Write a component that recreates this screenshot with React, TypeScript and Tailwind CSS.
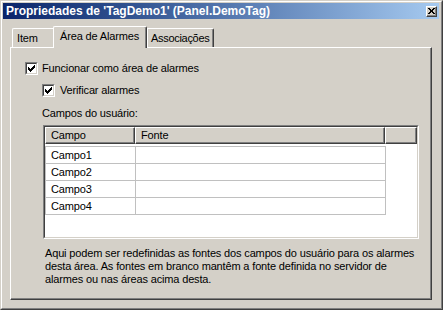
import React from "react";

function Check() {
  return (
    <svg width="7" height="7" viewBox="0 0 7 7" shapeRendering="crispEdges">
      <g fill="#000">
        <rect x="6" y="0" width="1" height="1" />
        <rect x="5" y="1" width="2" height="1" />
        <rect x="0" y="2" width="1" height="1" />
        <rect x="4" y="2" width="3" height="1" />
        <rect x="0" y="3" width="2" height="1" />
        <rect x="3" y="3" width="3" height="1" />
        <rect x="0" y="4" width="5" height="1" />
        <rect x="1" y="5" width="3" height="1" />
        <rect x="2" y="6" width="1" height="1" />
      </g>
    </svg>
  );
}

function CheckBox() {
  return (
    <div className="w-[13px] h-[13px] shrink-0 border border-t-[#808080] border-l-[#808080] border-r-white border-b-white">
      <div className="w-full h-full border border-t-[#404040] border-l-[#404040] border-r-[#d4d0c8] border-b-[#d4d0c8] bg-white flex items-center justify-center">
        <Check />
      </div>
    </div>
  );
}

function CloseX() {
  return (
    <svg width="7" height="6" viewBox="0 0 7 6" shapeRendering="crispEdges">
      <g fill="#000">
        <rect x="0" y="0" width="2" height="1" />
        <rect x="5" y="0" width="2" height="1" />
        <rect x="1" y="1" width="2" height="1" />
        <rect x="4" y="1" width="2" height="1" />
        <rect x="2" y="2" width="3" height="1" />
        <rect x="2" y="3" width="3" height="1" />
        <rect x="1" y="4" width="2" height="1" />
        <rect x="4" y="4" width="2" height="1" />
        <rect x="0" y="5" width="2" height="1" />
        <rect x="5" y="5" width="2" height="1" />
      </g>
    </svg>
  );
}

const headerCls =
  "h-[17px] flex items-center pl-[5px] border border-t-white border-l-white border-r-[#404040] border-b-[#404040] shadow-[inset_-1px_-1px_0_#808080] bg-[#d4d0c8] leading-[13px]";

export default function App() {
  const rows = ["Campo1", "Campo2", "Campo3", "Campo4"];
  return (
    <div className="w-[443px] h-[310px] border border-t-[#d4d0c8] border-l-[#d4d0c8] border-r-[#404040] border-b-[#404040] bg-[#d4d0c8] font-['Liberation_Sans',Arial,sans-serif] text-[11px] tracking-[-0.15px] text-black">
      <div className="h-full border border-t-white border-l-white border-r-[#808080] border-b-[#808080] flex flex-col">
        {/* Title bar */}
        <div className="mt-px ml-px mr-[2px] h-[16px] shrink-0 flex items-center justify-between pl-[3px] pr-[2px] bg-linear-to-r from-[#0a246a] to-[#a6caf0]">
          <span className="text-white font-bold text-[12px] tracking-[0px] leading-[14px] whitespace-nowrap">
            Propriedades de 'TagDemo1' (Panel.DemoTag)
          </span>
          <div className="w-[11px] h-[11px] border border-t-white border-l-white border-r-[#404040] border-b-[#404040] shadow-[inset_-1px_-1px_0_#808080] bg-[#d4d0c8] flex items-center justify-center">
            <CloseX />
          </div>
        </div>

        {/* Body */}
        <div className="flex-1 flex flex-col ml-[8px] mr-[9px] mb-[8px]">
          {/* Tabs */}
          <div className="mt-[7px] h-[21px] shrink-0 flex items-end ml-[2px]">
            <div className="w-[41px] h-[19px] border-l border-t border-white rounded-tl-[2px] pl-[4px] pt-[3px] leading-[13px] whitespace-nowrap">
              Item
            </div>
            <div className="relative z-10 -mb-px w-[94px] h-[22px] bg-[#d4d0c8] border-l border-t border-l-white border-t-white border-r border-r-[#404040] shadow-[inset_-1px_0_0_#808080] rounded-t-[2px] pl-[6px] pt-[3px] leading-[13px] whitespace-nowrap">
              Área de Alarmes
            </div>
            <div className="w-[67px] h-[19px] border-l border-t border-l-white border-t-white border-r border-r-[#404040] shadow-[inset_-1px_0_0_#808080] rounded-tr-[2px] pl-[3px] pt-[3px] leading-[13px] whitespace-nowrap tracking-[-0.3px]">
              Associações
            </div>
          </div>

          {/* Panel */}
          <div className="flex-1 border border-t-white border-l-white border-r-[#404040] border-b-[#404040] shadow-[inset_-1px_-1px_0_#808080] pl-[14px] pt-[14px] flex flex-col items-start">
            <div className="flex items-center h-[13px] gap-[4px]">
              <CheckBox />
              <span className="leading-[13px]">Funcionar como área de alarmes</span>
            </div>
            <div className="flex items-center h-[13px] gap-[5px] mt-[9px] ml-[17px]">
              <CheckBox />
              <span className="leading-[13px]">Verificar alarmes</span>
            </div>
            <div className="mt-[10px] ml-[17px] leading-[13px]">Campos do usuário:</div>

            {/* List view */}
            <div className="mt-[5px] ml-[18px] w-[376px] h-[114px] shrink-0 border border-t-[#808080] border-l-[#808080] border-r-white border-b-white">
              <div className="w-full h-full border border-t-[#404040] border-l-[#404040] border-r-[#d4d0c8] border-b-[#d4d0c8] bg-white flex flex-col">
                <div className="flex">
                  <div className={`${headerCls} w-[90px]`}>Campo</div>
                  <div className={`${headerCls} w-[250px]`}>Fonte</div>
                  <div className={`${headerCls} w-[32px]`}></div>
                </div>
                <div className="mt-[2px] w-[341px] border-b border-[#c0c0c0]">
                  {rows.map((r) => (
                    <div key={r} className="flex h-[17px] border-t border-l border-r border-[#c0c0c0]">
                      <div className="w-[90px] border-r border-[#c0c0c0] pl-[5px] leading-[16px]">{r}</div>
                      <div className="flex-1"></div>
                    </div>
                  ))}
                </div>
              </div>
            </div>

            <div className="mt-[8px] ml-[20px] leading-[13px] whitespace-nowrap">
              Aqui podem ser redefinidas as fontes dos campos do usuário para os alarmes
              <br />
              desta área. As fontes em branco mantêm a fonte definida no servidor de
              <br />
              alarmes ou nas áreas acima desta.
            </div>
          </div>
        </div>
      </div>
    </div>
  );
}
